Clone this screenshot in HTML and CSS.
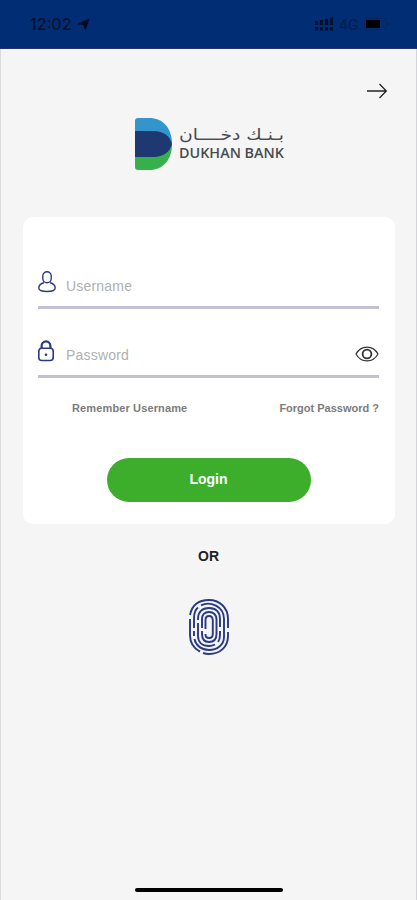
FILE: index.html
```html
<!DOCTYPE html>
<html lang="en">

<head>
	<meta charset="UTF-8">
	<meta name="viewport" content="width=device-width, initial-scale=1.0">
	<title>Dukhan Bank</title>
	<link rel="stylesheet" href="styles.css">
</head>

<body>
	<div class="screen">
		<header class="status-bar">
			<div class="status-left">
				<span class="time">12:02</span>
				<svg class="location" width="13" height="13" viewBox="0 0 13 13">
					<path d="M12.8 0.2L8.3 12.8L6.3 7L0.2 6.2Z" />
				</svg>
			</div>
			<div class="status-right">
				<svg width="20" height="14" viewBox="0 0 20 14">
					<path d="M2.5 4V8M7.5 3V8M12.5 2V8M17.5 0.5V8M2.5 10V13.5M7.5 10V13.5M12.5 10V13.5M17.5 10V13.5" stroke="#03112f" stroke-width="3.2" />
				</svg>
				<span class="network">4G</span>
				<svg width="26" height="12" viewBox="0 0 26 12">
					<rect x="0.5" y="0.5" width="22" height="11" rx="3" fill="none" stroke="#06255f" />
					<rect x="2" y="2" width="14" height="8" rx="1" fill="#000" />
					<path d="M24 4Q26 6 24 8Z" fill="#06255f" />
				</svg>
			</div>
		</header>

		<div class="top-nav">
			<a href="#" aria-label="Next">
				<svg width="22" height="16" viewBox="0 0 22 16">
					<path d="M1 8H20M13.5 1L20.3 8L13.5 15" fill="none" stroke="#222" stroke-width="1.3" />
				</svg>
			</a>
		</div>

		<div class="logo">
			<svg width="150" height="52" viewBox="0 0 150 52">
				<defs>
					<clipPath id="mark">
						<path d="M3 0H14C28 0 37 10 37 26S28 52 14 52H3Q0 52 0 49V3Q0 0 3 0Z" />
					</clipPath>
				</defs>
				<g clip-path="url(#mark)">
					<rect width="37" height="26" fill="#3495cd" />
					<rect y="26" width="37" height="26" fill="#36b04b" />
					<path d="M0 13H19C28 13 35 18 37 26C35 34 28 39 19 39H0Z" fill="#1e3872" />
				</g>
				<text class="logo-ar" x="96.5" y="22" text-anchor="middle" textLength="105" lengthAdjust="spacingAndGlyphs">بـنـك دخــــان</text>
				<text class="logo-en" x="44" y="40" textLength="105" lengthAdjust="spacingAndGlyphs">DUKHAN BANK</text>
			</svg>
		</div>

		<form class="card">
			<div class="field">
				<svg width="18" height="22" viewBox="0 0 18 22" fill="none" stroke="#293b83" stroke-width="1.4">
					<rect x="4.8" y="0.8" width="8.4" height="11" rx="4.2" />
					<path d="M6 11.8C2.5 12.6 0.8 14.5 0.8 17C0.8 19.8 4 20.5 9 20.5S17.2 19.8 17.2 17C17.2 14.5 15.5 12.6 12 11.8" />
				</svg>
				<input type="text" placeholder="Username">
			</div>
			<div class="field">
				<svg width="18" height="22" viewBox="0 0 18 22" fill="none" stroke="#293b83" stroke-width="1.6">
					<path d="M3.6 8.5V6A4.4 4.6 0 0 1 12.4 6V8.5" stroke-width="2.2" />
					<rect x="0.8" y="8.3" width="14.4" height="12.2" rx="3" />
					<circle cx="8" cy="14.7" r="1.3" fill="#293b83" stroke="none" />
				</svg>
				<input type="password" placeholder="Password">
				<svg class="eye" width="24" height="16" viewBox="0 0 24 16" fill="none" stroke="#333" stroke-width="1.2">
					<path d="M1 8C6 -1.2 18 -1.2 23 8C18 17.2 6 17.2 1 8Z" />
					<circle cx="12" cy="8" r="4.4" stroke-width="1.8" />
				</svg>
			</div>
			<div class="links">
				<a class="remember" href="#">Remember Username</a>
				<a class="forgot" href="#">Forgot Password ?</a>
			</div>
			<button class="login-button" type="button">Login</button>
		</form>

		<div class="or">OR</div>

		<div class="fingerprint">
			<svg width="40" height="56" viewBox="0 0 40 56" fill="none" stroke="#283985" stroke-width="1.9">
				<path d="M1 16C3 6 10 1 20 1S39 8 39 20V29M39 33V37C39 48 31 55 20 55C18 55 16 54.7 14 54M11 52.7C4 49 1 43 1 36V20" />
				<path d="M5 29V19C5 15 6 11 9 8.5M12 6.3C21 2 35 7 35 20V38C35 46 28 51 20 51C13 51 7 47 5.4 40M5 37V32" />
				<path d="M9 24V37C9 43 13 47 20 47C22 47 24 46.5 26 45.5M29 43C30.5 41 31 39 31 36V32M31 28V20C31 13 27 9 20 9C13 9 9 13 9 20V21" />
				<path d="M13 29V20C13 16 15.5 13 20 13S27.5 16 27.5 20V35C27.5 40 25 43 20 43S13 40 13 35V32" />
				<path d="M16.5 30V21Q16.5 17 20 17T23.8 21V35Q23.8 39 20 39T16.5 35" />
			</svg>
		</div>

		<div class="home-indicator"></div>
	</div>
</body>

</html>
```

FILE: styles.css
```css
* {
	box-sizing: border-box;
}

body {
	font-family: "Liberation Sans", Arial, sans-serif;
	margin: 0;
	padding: 0;
	background-color: #f5f5f5;
}

.screen {
	display: flex;
	flex-direction: column;
	height: 900px;
	border-left: 1px solid #dcdcdc;
	border-right: 1px solid #d4d4d8;
}

.status-bar {
	display: flex;
	justify-content: space-between;
	height: 49px;
	margin: 0 -1px;
	padding: 14px 27px 0 30px;
	background: #002d74;
	border-bottom: 1px solid #28306a;
	color: #03112f;
}

.status-left,
.status-right {
	display: flex;
	align-items: center;
	height: 20px;
}

.time {
	width: 43px;
	font-family: Inter, sans-serif;
	font-size: 16px;
	font-weight: 500;
}

.location {
	margin-left: 4px;
	fill: #000a20;
}

.network {
	width: 19px;
	margin: 0 6px 0 5px;
	font-family: Inter, sans-serif;
	font-size: 14px;
	color: #041c4a;
}

.top-nav {
	display: flex;
	justify-content: flex-end;
	height: 69px;
	padding: 34px 28px 0 0;
}

.top-nav a {
	height: 16px;
}

.top-nav svg,
.logo svg,
.fingerprint svg {
	display: block;
}

.logo {
	padding-left: 134px;
}

.logo-ar {
	font-family: "DejaVu Sans", sans-serif;
	font-size: 16px;
	fill: #4a4b4d;
}

.logo-en {
	font-family: "Open Sans", sans-serif;
	font-size: 14px;
	font-weight: 600;
	fill: #4a4b4e;
}

.card {
	height: 307px;
	margin: 47px 21px 0 22px;
	padding: 47px 16px 0 15px;
	border-radius: 10px;
	background: #ffffff;
}

.field {
	display: flex;
	align-items: center;
	height: 45px;
	padding-bottom: 6px;
	border-bottom: 3px solid #c1c1d2;
}

.field + .field {
	margin-top: 24px;
}

.field input {
	flex: 1;
	min-width: 0;
	margin-left: 10px;
	padding: 8px 0 0;
	border: none;
	outline: none;
	background: transparent;
	font-family: "Liberation Sans", Arial, sans-serif;
	font-size: 14px;
	letter-spacing: 0.2px;
}

.field input::placeholder {
	color: #b0b0b0;
}

.field .eye {
	margin-top: 6px;
}

.links {
	display: flex;
	justify-content: space-between;
	padding: 23px 0 0 34px;
	font-size: 11px;
	line-height: 14px;
	font-weight: bold;
}

.links a {
	color: #7c7c7c;
	text-decoration: none;
	white-space: nowrap;
}

.remember {
	letter-spacing: 0.13px;
}

.login-button {
	display: block;
	width: 204px;
	height: 44px;
	margin: 43px auto 0;
	padding: 0 0 3px;
	border: none;
	border-radius: 22px;
	background: #3dad2c;
	color: #ffffff;
	font-family: "Liberation Sans", Arial, sans-serif;
	font-size: 14px;
	font-weight: bold;
}

.or {
	margin-top: 24px;
	text-align: center;
	font-size: 14px;
	line-height: 16px;
	font-weight: bold;
	color: #222222;
}

.fingerprint {
	display: flex;
	justify-content: center;
	margin-top: 35px;
}

.home-indicator {
	width: 148px;
	height: 4px;
	margin: auto auto 8px;
	border-radius: 2px;
	background: #000000;
}
```
